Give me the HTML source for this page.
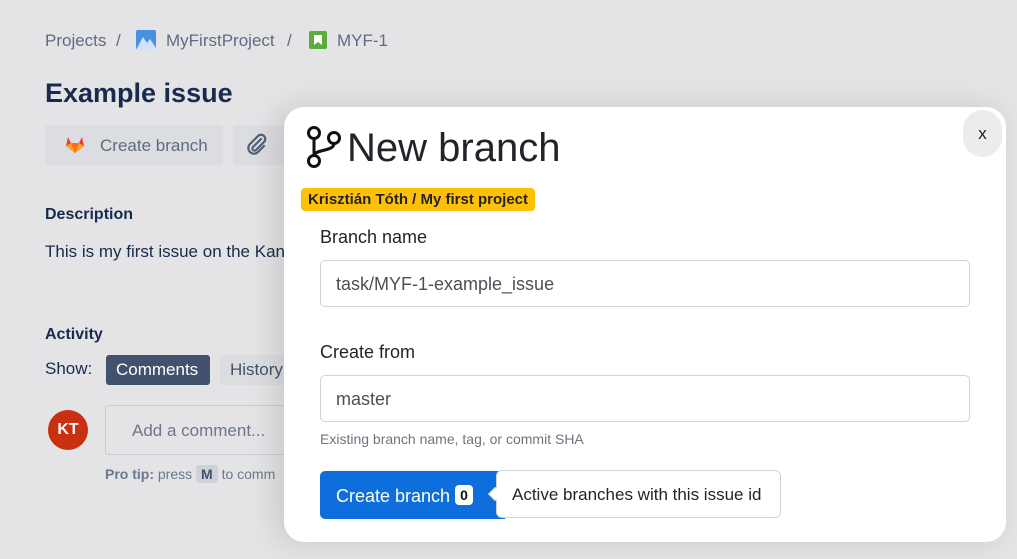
<!DOCTYPE html>
<html><head><meta charset="utf-8"><style>
*{box-sizing:border-box;margin:0;padding:0}
body{width:1017px;height:559px;overflow:hidden;background:#e4e4e6;font-family:"Liberation Sans","DejaVu Sans",sans-serif;position:relative;color:#42526e}
.a{position:absolute;white-space:nowrap}
</style></head><body>
<div class="a" style="left:45px;top:31px;font-size:17px;color:#5e6c84">Projects</div>
<div class="a" style="left:116px;top:31px;font-size:17px;color:#5e6c84">/</div>
<svg class="a" style="left:136px;top:30px" width="20" height="20"><rect width="20" height="20" rx="2" fill="#4a90e2"/><path d="M0 20 L7 7 L11 13 L14 9 L20 18 L20 20Z" fill="#cfe3fb"/></svg>
<div class="a" style="left:166px;top:31px;font-size:17px;color:#5e6c84">MyFirstProject</div>
<div class="a" style="left:287px;top:31px;font-size:17px;color:#5e6c84">/</div>
<svg class="a" style="left:309px;top:31px" width="18" height="18"><rect width="18" height="18" rx="2" fill="#5cab3c"/><path d="M5 4h8v10l-4-3-4 3z" fill="#fff"/></svg>
<div class="a" style="left:337px;top:31px;font-size:17px;color:#5e6c84">MYF-1</div>
<div class="a" style="left:45px;top:78px;font-size:27px;font-weight:bold;color:#172b4d">Example issue</div>
<div class="a" style="left:45px;top:125px;width:178px;height:40px;background:#dcdde0;border-radius:3px"></div>
<svg class="a" style="left:65px;top:135px" width="20" height="19" viewBox="0 0 20 19"><path d="M10 18 L1 11 L3 2 L6 8 L14 8 L17 2 L19 11Z" fill="#e24329"/><path d="M10 18 L6 8 L14 8Z" fill="#fc6d26"/><path d="M1 11 L6 8 L10 18Z" fill="#fca326"/><path d="M19 11 L14 8 L10 18Z" fill="#fca326"/></svg>
<div class="a" style="left:100px;top:136px;font-size:17px;color:#5e6c84">Create branch</div>
<div class="a" style="left:233px;top:125px;width:60px;height:40px;background:#dcdde0;border-radius:3px"></div>
<svg class="a" style="left:245px;top:133px" width="24" height="24" viewBox="0 0 24 24"><path d="M16 6 L8 14 a2 2 0 0 0 3 3 L19 9 a4 4 0 0 0 -6 -6 L5 11 a5.5 5.5 0 0 0 8 8 L19 13" fill="none" stroke="#505f79" stroke-width="2.2" stroke-linecap="round"/></svg>
<div class="a" style="left:45px;top:206px;font-size:16px;font-weight:bold;color:#172b4d">Description</div>
<div class="a" style="left:45px;top:242px;font-size:17px;color:#172b4d">This is my first issue on the Kan</div>
<div class="a" style="left:45px;top:326px;font-size:16px;font-weight:bold;color:#172b4d">Activity</div>
<div class="a" style="left:45px;top:359px;font-size:17px;color:#172b4d">Show:</div>
<div class="a" style="left:106px;top:355px;width:104px;height:30px;background:#42526e;border-radius:3px;color:#fff;font-size:17px;padding:5px 0 0 10px">Comments</div>
<div class="a" style="left:220px;top:355px;width:80px;height:30px;background:#dcdde0;border-radius:3px;font-size:17px;padding:5px 0 0 10px">History</div>
<div class="a" style="left:48px;top:410px;width:40px;height:40px;border-radius:50%;background:#c9300f;color:#fff;font-size:16px;font-weight:bold;text-align:center;line-height:40px">KT</div>
<div class="a" style="left:105px;top:405px;width:200px;height:50px;border:1px solid #c9cbd0;border-radius:3px;font-size:17px;color:#6b778c;padding:15px 0 0 26px">Add a comment...</div>
<div class="a" style="left:105px;top:466px;font-size:14px;color:#6b778c"><b>Pro tip:</b> press <span style="background:#cfd1d6;border-radius:3px;padding:1px 5px;font-weight:bold;color:#42526e">M</span> to comm</div>
<div class="a" style="left:284px;top:107px;width:722px;height:435px;background:#fff;border-radius:20px;box-shadow:-8px 0 30px rgba(0,0,0,.12)"></div>
<div class="a" style="left:963px;top:110px;width:39px;height:47px;background:#ececec;border-radius:20px;text-align:center;line-height:47px;font-size:17px;color:#222">x</div>
<svg class="a" style="left:304px;top:124px" width="40" height="46" viewBox="0 0 40 46"><g fill="none" stroke="#111" stroke-width="3"><circle cx="10" cy="9" r="5.5"/><circle cx="10" cy="37" r="5.5"/><circle cx="30" cy="14" r="5.5"/><path d="M10 14.5V31.5M30 19.5c0 8-20 6-20 12"/></g></svg>
<div class="a" style="left:347px;top:126px;font-size:40px;color:#212529">New branch</div>
<div class="a" style="left:301px;top:188px;height:23px;padding:3px 7px;background:#ffc107;border-radius:4px;font-size:15px;font-weight:bold;color:#212529;line-height:17px">Krisztián Tóth / My first project</div>
<div class="a" style="left:320px;top:227px;font-size:18px;color:#212529">Branch name</div>
<div class="a" style="left:320px;top:260px;width:650px;height:47px;border:1px solid #ced4da;border-radius:5px;font-size:18px;color:#495057;padding:13px 0 0 15px">task/MYF-1-example_issue</div>
<div class="a" style="left:320px;top:342px;font-size:18px;color:#212529">Create from</div>
<div class="a" style="left:320px;top:375px;width:650px;height:47px;border:1px solid #ced4da;border-radius:5px;font-size:18px;color:#495057;padding:13px 0 0 15px">master</div>
<div class="a" style="left:320px;top:431px;font-size:14px;color:#6c757d">Existing branch name, tag, or commit SHA</div>
<div class="a" style="left:320px;top:471px;width:185px;height:48px;background:#0d6edc;border-radius:5px 0 0 5px;color:#fff;font-size:18px;padding:14px 0 0 16px">Create branch <span style="display:inline-block;background:#fff;color:#111;border-radius:4px;font-size:14px;font-weight:bold;padding:2px 5px;vertical-align:2px">0</span></div>
<div class="a" style="left:496px;top:470px;width:285px;height:48px;border:1px solid #ced4da;background:#fff;border-radius:6px;font-size:17px;color:#212529;padding:14px 0 0 15px">Active branches with this issue id</div>
<div class="a" style="left:490px;top:489px;width:10px;height:10px;background:#fff;transform:rotate(45deg);border-left:1px solid #ced4da;border-bottom:1px solid #ced4da"></div>
</body></html>
